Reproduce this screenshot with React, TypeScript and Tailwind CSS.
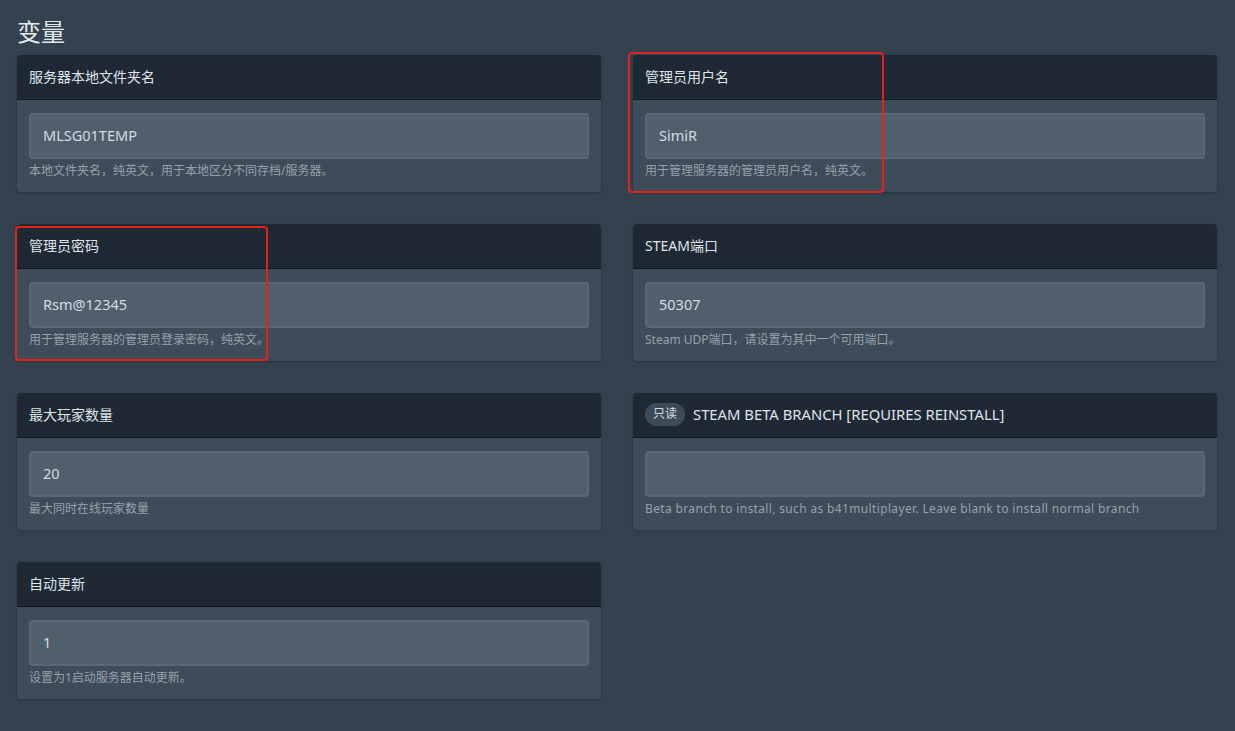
import React from "react";

type Field = {
  label: string;
  value: string;
  help: string;
  readOnly?: boolean;
  highlight?: "a" | "b";
};

const fields: Field[] = [
  { label: "服务器本地文件夹名", value: "MLSG01TEMP", help: "本地文件夹名，纯英文，用于本地区分不同存档/服务器。" },
  { label: "管理员用户名", value: "SimiR", help: "用于管理服务器的管理员用户名，纯英文。", highlight: "a" },
  { label: "管理员密码", value: "Rsm@12345", help: "用于管理服务器的管理员登录密码，纯英文。", highlight: "b" },
  { label: "STEAM端口", value: "50307", help: "Steam UDP端口，请设置为其中一个可用端口。" },
  { label: "最大玩家数量", value: "20", help: "最大同时在线玩家数量" },
  {
    label: "STEAM BETA BRANCH [REQUIRES REINSTALL]",
    value: "",
    help: "Beta branch to install, such as b41multiplayer. Leave blank to install normal branch",
    readOnly: true,
  },
  { label: "自动更新", value: "1", help: "设置为1启动服务器自动更新。" },
];

function Card({ f }: { f: Field }) {
  return (
    <div className="relative rounded-[4px] bg-[#3e4b58] shadow-[0_1px_3px_rgba(0,0,0,0.25)]">
      <div className="flex h-[45px] items-center gap-2 rounded-t-[4px] border-b border-[#11181f] bg-[#1f2933] px-3 pb-[2px] text-[14px] text-[#dfe4ea]">
        {f.readOnly && (
          <span className="flex h-[23px] items-center rounded-full bg-[#3e4b58] px-[8px] text-[12px] text-[#d5dbe1]">
            只读
          </span>
        )}
        <span className={f.readOnly ? "text-[14.8px]" : ""}>{f.label}</span>
      </div>
      <div className="px-3 pb-[13px] pt-[13px]">
        <div className="flex h-[46px] items-center rounded-[4px] border-2 border-[#5b6774] bg-[#515f6c] px-[12px] text-[14.5px] text-[#d3dbe3]">
          {f.value}
        </div>
        <div
          className={
            "mt-[4px] h-[16px] text-[12px] leading-[16px] text-[#96a2ae]" +
            (f.readOnly ? " tracking-[0.35px]" : "")
          }
        >
          {f.help}
        </div>
      </div>
      {f.highlight === "a" && (
        <div className="pointer-events-none absolute left-[-5px] top-[-3px] h-[141px] w-[256px] rounded-[4px] border-2 border-[#e0241b]" />
      )}
      {f.highlight === "b" && (
        <div className="pointer-events-none absolute left-[-2px] top-[2px] h-[135px] w-[253px] rounded-[4px] border-2 border-[#e0241b]" />
      )}
    </div>
  );
}

export default function App() {
  return (
    <div
      className="min-h-[731px] bg-[#344250] pl-[17px] pr-[18px] pt-[16px]"
      style={{ fontFamily: '"Noto Sans", "Noto Sans CJK SC", sans-serif' }}
    >
      <h1 className="mb-[7px] h-[32px] text-[24px] leading-[32px] text-[#e3e8ed]">变量</h1>
      <div className="grid grid-cols-2 gap-x-[32px] gap-y-[32px]">
        {fields.map((f, i) => (
          <Card key={i} f={f} />
        ))}
      </div>
    </div>
  );
}
